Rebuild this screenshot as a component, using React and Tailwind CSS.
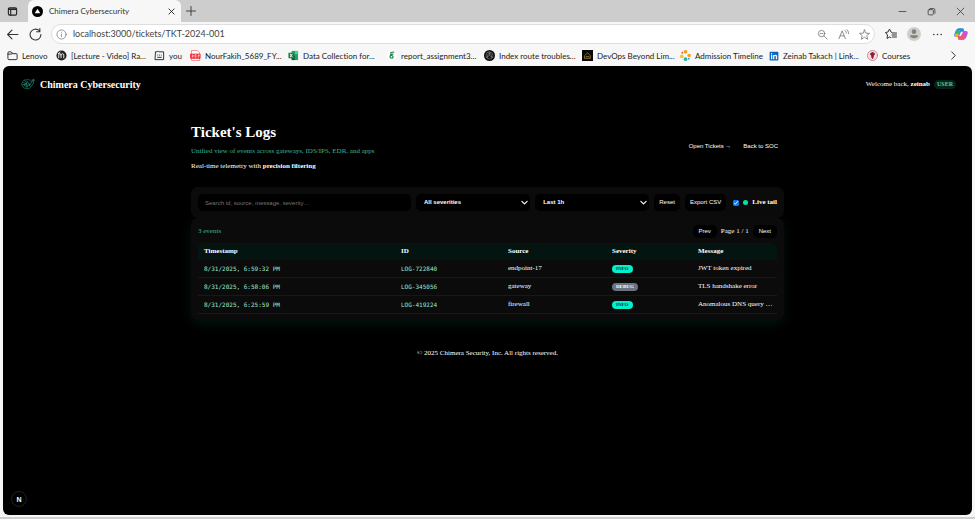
import React from "react";
import { FaLinkedin } from "react-icons/fa";

const stroke = { fill: "none", stroke: "currentColor", strokeLinecap: "round", strokeLinejoin: "round" };

function Icon({ size = "size-[11px]", box = "0 0 24 24", width = 2, className = "", children }) {
  return (
    <svg viewBox={box} {...stroke} strokeWidth={width} className={`${size} shrink-0 ${className}`} aria-hidden="true">
      {children}
    </svg>
  );
}

const bookmarks = [
  {
    label: "Lenovo",
    slot: "w-[49px]",
    icon: (
      <Icon>
        <path d="M2 6a2 2 0 0 1 2-2h5l3 4h8a2 2 0 0 1 2 2v9a2 2 0 0 1-2 2H4a2 2 0 0 1-2-2zM2 9h7l3-2" />
      </Icon>
    ),
  },
  {
    label: "[Lecture - Video] Ra...",
    slot: "w-[98px]",
    icon: (
      <Icon>
        <circle cx="12" cy="12" r="11" fill="#222" stroke="none" />
        <path d="M6 17v-6c0-4 5-4 5 0v6m0-6c0-4 6-4 6 0v6M5 8l4-3" stroke="#fff" />
      </Icon>
    ),
  },
  {
    label: "you",
    slot: "w-[36px]",
    icon: (
      <Icon>
        <path d="M3 8V4h4l2-2 2 2h10v17H3zM8 11v.1M12 11v.1M16 11v.1M8 16h8" />
      </Icon>
    ),
  },
  {
    label: "NourFakih_5689_FY...",
    slot: "w-[98px]",
    icon: (
      <Icon>
        <path d="M4 1h12l5 5v17H4z" fill="#fff" stroke="#e88" />
        <path d="M2 9h20v9H2z" fill="#f02a2f" stroke="#f02a2f" />
        <path d="M5 16v-5h2v3H5M11 11v5h2v-5zM18 16v-5h3M18 13h2" stroke="#fff" strokeWidth="1.2" />
      </Icon>
    ),
  },
  {
    label: "Data Collection for...",
    slot: "w-[98px]",
    icon: (
      <Icon>
        <path d="M8 2h14v20H8z" fill="#21a366" stroke="none" />
        <path d="M15 2h7v7h-7z" fill="#4fd08c" stroke="none" />
        <path d="M8 12h7v10H8z" fill="#185c37" stroke="none" />
        <path d="M1 6h12v12H1z" fill="#107c41" stroke="none" />
        <path d="m5 9 4 6m0-6-4 6" stroke="#fff" />
      </Icon>
    ),
  },
  {
    label: "report_assignment3...",
    slot: "w-[98px]",
    icon: (
      <Icon>
        <circle cx="12" cy="12" r="11" fill="#fff" stroke="none" />
        <path d="M15 9c-7-1-8 9-3 9 5 0 4-6 0-6M10 7c1-3 4-3 7-2" stroke="#16803f" strokeWidth="2.6" />
      </Icon>
    ),
  },
  {
    label: "Index route troubles...",
    slot: "w-[98px]",
    icon: (
      <Icon>
        <circle cx="12" cy="12" r="12" fill="#111" stroke="none" />
        <path d="M12 4l7 4v8l-7 4-7-4V8zM12 4v8l7 4M12 12l-7 4M8 6l8 4v8M16 6l-8 4v8" stroke="#999" strokeWidth="1" />
      </Icon>
    ),
  },
  {
    label: "DevOps Beyond Lim...",
    slot: "w-[98px]",
    icon: (
      <Icon>
        <path d="M0 0h24v24H0z" fill="#080808" stroke="none" />
        <path d="M6 12l6-6 6 6v6H6zM9 14h6" stroke="#8f7430" />
        <path d="M6 18h12" stroke="#6a5440" />
      </Icon>
    ),
  },
  {
    label: "Admission Timeline",
    slot: "w-[89px]",
    icon: (
      <Icon>
        <circle cx="12" cy="4" r="4" fill="#f39c1f" stroke="none" />
        <circle cx="20" cy="12" r="4" fill="#f3a51f" stroke="none" />
        <circle cx="12" cy="20" r="4" fill="#27b3a5" stroke="none" />
        <circle cx="4" cy="14" r="4" fill="#f1c430" stroke="none" />
        <circle cx="5" cy="6" r="2" fill="#e6543a" stroke="none" />
        <circle cx="19" cy="19" r="2" fill="#36a8d8" stroke="none" />
      </Icon>
    ),
  },
  {
    label: "Zeinab Takach | Link...",
    slot: "w-[98px]",
    icon: <FaLinkedin className="size-[10px] shrink-0 text-[#0a66c2]" />,
  },
  {
    label: "Courses",
    slot: "w-[60px]",
    icon: (
      <Icon>
        <circle cx="12" cy="12" r="11" fill="#f3dfe4" stroke="#b5657c" strokeWidth="1.5" />
        <path d="M12 6a3 3 0 0 1 2 6l-1 6h-2l-1-6a3 3 0 0 1 2-6z" fill="#951836" stroke="#951836" />
      </Icon>
    ),
  },
];

function Chrome() {
  return (
    <header className="font-[Lato,'Open_Sans',sans-serif] text-[#333] [font-variant-ligatures:none]">
      <div className="flex h-[22px] items-stretch bg-[#cdcdcd]">
        <button type="button" aria-label="Tab actions" className="flex w-7 items-center pl-[7px]">
          <Icon width={2.4} className="text-[#222]">
            <rect x="3" y="4" width="18" height="16" rx="3" />
            <path d="M4 7h16" strokeWidth="3" />
            <path d="M8 8v12" />
          </Icon>
        </button>
        <div className="flex w-[153px] items-center rounded-t-md bg-[#f7f7f7] pr-[5px] pl-1">
          <Icon>
            <circle cx="12" cy="12" r="12" fill="#000" stroke="none" />
            <path d="M12 6l6 10H6z" fill="#fff" stroke="none" />
          </Icon>
          <span className="ml-[6px] flex-1 text-[8px] leading-[18px] whitespace-nowrap">Chimera Cybersecurity</span>
          <button type="button" aria-label="Close tab">
            <Icon size="size-[9px]" width={2.4} className="text-[#222]">
              <path d="m5 5 14 14M19 5 5 19" />
            </Icon>
          </button>
        </div>
        <button type="button" aria-label="New tab" className="px-1">
          <Icon size="size-[12px]" width={1.8}>
            <path d="M12 3v18M3 12h18" />
          </Icon>
        </button>
        <div className="ml-auto flex items-center gap-5 pr-[10px]">
          <button type="button" aria-label="Minimize">
            <Icon size="size-[9px]"><path d="M3 12h18" /></Icon>
          </button>
          <button type="button" aria-label="Restore">
            <Icon size="size-[9px]">
              <rect x="3" y="7" width="14" height="14" rx="3" />
              <path d="M8 4h9a4 4 0 0 1 4 4v9" />
            </Icon>
          </button>
          <button type="button" aria-label="Close window">
            <Icon size="size-[9px]"><path d="m3 3 18 18M21 3 3 21" /></Icon>
          </button>
        </div>
      </div>

      <div className="flex h-6 items-center bg-[#f7f7f7] pr-[7px] pl-[6px]">
        <button type="button" aria-label="Back">
          <Icon size="size-[13px]"><path d="M22 12H3M11 4l-8 8 8 8" /></Icon>
        </button>
        <button type="button" aria-label="Refresh" className="ml-[10px]">
          <Icon size="size-[13px]"><path d="M19 5a10 10 0 1 0 3 7M20 1v6h-6" /></Icon>
        </button>
        <div className="ml-[9px] flex h-5 flex-1 items-center rounded-full border border-[#dedede] bg-white px-1">
          <Icon className="text-[#777]" width={1.6}>
            <circle cx="12" cy="12" r="10" />
            <path d="M12 11v6M12 7v.1" />
          </Icon>
          <input
            aria-label="Address"
            defaultValue="localhost:3000/tickets/TKT-2024-001"
            className="ml-[6px] min-w-0 flex-1 bg-transparent text-[9px] text-[#444] outline-none"
          />
          <div className="flex items-center gap-[10px] text-[#777]">
            <button type="button" aria-label="Zoom out">
              <Icon width={1.8}><circle cx="10" cy="10" r="7" /><path d="m15 15 7 7M7 10h6" /></Icon>
            </button>
            <button type="button" aria-label="Read aloud">
              <Icon width={1.8}><path d="M2 21 9 4l7 17M5 15h8M15 3c2 1 3 3 3 6M19 1c3 2 4 5 4 9" /></Icon>
            </button>
            <button type="button" aria-label="Add to favorites">
              <Icon width={1.8}><path d="m12 2 3 7 8 .5-6 5 2 8-7-4.500-7 4.500 2-8-6-5L9 9z" /></Icon>
            </button>
          </div>
        </div>
        <button type="button" aria-label="Favorites" className="ml-[10px]">
          <Icon size="size-[12px]"><path d="m14 9-2-1-3-6-3 6-5 1 4 5-1 7 5-3 3 1M15 10h8M14 14h9M15 18h8" /></Icon>
        </button>
        <button type="button" aria-label="Profile" className="ml-[10px]">
          <Icon size="size-[14px]">
            <circle cx="12" cy="12" r="12" fill="#d0cecb" stroke="none" />
            <circle cx="12" cy="8" r="4" fill="#84817d" stroke="none" />
            <path d="M5 14h14c0 7-14 7-14 0z" fill="#84817d" stroke="none" />
          </Icon>
        </button>
        <button type="button" aria-label="More" className="ml-[11px]">
          <Icon width={3.5}><path d="M4 12v.1M12 12v.1M20 12v.1" /></Icon>
        </button>
        <button type="button" aria-label="Copilot" className="ml-[11px]">
          <Icon size="size-[14px]" width={1}>
            <path d="M9 2h7l2 6h-6L8 17H4c-4 0-4-3-3-6 2-5 3-9 8-9z" fill="#2b8be6" stroke="none" />
            <path d="M4 8c-4 8-3 10 3 9l2-8z" fill="#f0b429" stroke="none" />
            <path d="M5 5h6L9 12H2z" fill="#35b97c" stroke="none" />
            <path d="M15 22H8l-2-6h6l4-9h4c4 0 4 3 3 6-2 5-3 9-8 9z" fill="#c954d8" stroke="none" />
            <path d="M8 22l-2-6h6l2-4 5 6c-1 3-2 4-4 4z" fill="#f0596d" stroke="none" />
          </Icon>
        </button>
      </div>

      <nav aria-label="Bookmarks" className="flex h-5 items-center bg-[#f7f7f7] pr-4 pb-px pl-[7px] text-[8px] text-[#222]">
        {bookmarks.map((b) => (
          <a key={b.label} href="#" className={`flex shrink-0 items-center gap-1 whitespace-nowrap ${b.slot}`}>
            {b.icon}
            {b.label}
          </a>
        ))}
        <button type="button" aria-label="More bookmarks" className="ml-auto">
          <Icon><path d="m8 4 8 8-8 8" /></Icon>
        </button>
      </nav>
    </header>
  );
}

const events = [
  { time: "8/31/2025, 6:59:32 PM", id: "LOG-722840", source: "endpoint-17", severity: "INFO", message: "JWT token expired" },
  { time: "8/31/2025, 6:58:06 PM", id: "LOG-345056", source: "gateway", severity: "DEBUG", message: "TLS handshake error" },
  { time: "8/31/2025, 6:25:59 PM", id: "LOG-419224", source: "firewall", severity: "INFO", message: "Anomalous DNS query …" },
];

const badgeTone = {
  INFO: "bg-[#00f0d0] text-[#02302a]",
  DEBUG: "bg-[#6b7280] text-white",
};

const control = "rounded-[5px] bg-black font-['Liberation_Sans',Arial,sans-serif] text-[6px] text-white";

function Picker({ label, options }) {
  return (
    <div className="relative flex-1">
      <select aria-label={label} className={`${control} block h-[17px] w-full appearance-none px-2 font-bold`}>
        {options.map((o) => <option key={o}>{o}</option>)}
      </select>
      <Icon size="size-[7px]" width={4} className="pointer-events-none absolute top-[5px] right-[2px] text-white">
        <path d="m3 8 9 9 9-9" />
      </Icon>
    </div>
  );
}

export default function App() {
  return (
    <div className="flex min-h-screen flex-col border-b-2 border-[#cfcfcf] bg-[#f7f7f7]">
      <Chrome />
      <div className="mx-[3px] mb-[2px] flex flex-1 flex-col rounded-md bg-black px-2 font-['Liberation_Serif','Times_New_Roman',serif] text-[7px] text-white">
        <div className="flex h-9 items-center pr-2 pl-[10px]">
          <Icon size="h-[12px] w-[14px]" box="0 0 28 24" width={1.4} className="text-[#1b9480]">
            <path d="M2 13c-1-6 4-10 8-9 4-2 9 0 10 3l6-5-1 8-4 6c-2 4-6 7-10 5-5 0-9-4-9-8z" strokeDasharray="3 2" />
            <path d="M5 9l5 3 3-5 4 6 6-6M7 15l5 2 4-3 3 3M12 12v8M22 4l4 1M8 6l3 2M5 13h3" />
            <circle cx="10" cy="12" r="1" />
            <circle cx="17" cy="13" r="1" />
          </Icon>
          <span className="ml-[5px] text-[10px] font-bold">Chimera Cybersecurity</span>
          <span className="ml-auto">Welcome back, <b>zeinab</b></span>
          <span className="ml-1 rounded-full bg-[#04231d] px-[3px] text-[6px] leading-[9px] font-bold text-[#4fcdb0]">USER</span>
        </div>

        <main className="mx-auto w-full max-w-[593px] pt-[19px]">
          <div className="flex items-center justify-between">
            <div>
              <h1 className="text-[15px] leading-[22px] font-bold">Ticket's Logs</h1>
              <p className="mt-[3px] leading-[10px] text-[#3fb595]">Unified view of events across gateways, IDS/IPS, EDR, and apps</p>
              <p className="mt-[6px] leading-[9px]">Real-time telemetry with <b>precision filtering</b></p>
            </div>
            <div className="flex">
              <button type="button" className={`${control} h-[17px] px-[6px]`}>Open Tickets →</button>
              <button type="button" className={`${control} h-[17px] px-[6px]`}>Back to SOC</button>
            </div>
          </div>

          <form className="mt-4 flex items-center gap-[5px] rounded-[7px] bg-[#0b0b0b] px-[7px] py-[7px]" onSubmit={(e) => e.preventDefault()}>
            <input aria-label="Search events" placeholder="Search id, source, message, severity…" className={`${control} h-[17px] w-[213px] px-[7px] placeholder:text-[#757575]`} />
            <Picker label="Severity" options={["All severities", "Info", "Debug"]} />
            <Picker label="Time range" options={["Last 1h", "Last 24h"]} />
            <button type="reset" className={`${control} h-[17px] px-[5px]`}>Reset</button>
            <button type="button" className={`${control} h-[17px] px-[5px]`}>Export CSV</button>
            <label className="ml-[2px] flex items-center gap-1 font-bold whitespace-nowrap">
              <input type="checkbox" defaultChecked className="size-[6px] accent-[#0075ff]" />
              <span className="size-[5px] rounded-full bg-[#00e5b0]" />
              Live tail
            </label>
          </form>

          <section className="rounded-[7px] bg-[#0b0b0b] px-[7px] pt-[7px] pb-[6px] shadow-[0_4px_12px_#00140f]">
            <div className="flex h-[13px] items-center">
              <span className="text-[#3fb595]">3 events</span>
              <button type="button" className={`${control} ml-auto h-[13px] px-[6px]`}>Prev</button>
              <span className="px-1">Page 1 / 1</span>
              <button type="button" className={`${control} h-[13px] px-[6px]`}>Next</button>
            </div>
            <table className="mt-[5px] w-full table-fixed border-separate border-spacing-0 text-left">
              <colgroup>
                <col />
                <col className="w-[107px]" />
                <col className="w-[104px]" />
                <col className="w-[86px]" />
                <col className="w-[85px]" />
              </colgroup>
              <thead>
                <tr className="h-[17px]">
                  {["Timestamp", "ID", "Source", "Severity", "Message"].map((h) => (
                    <th key={h} className="bg-[#031411] py-0 pl-[6px] font-bold first:rounded-tl-[5px] last:rounded-tr-[5px]">{h}</th>
                  ))}
                </tr>
              </thead>
              <tbody className="[&_td]:border-b [&_td]:border-[#06211b] [&_td]:py-0 [&_td]:pl-[6px]">
                {events.map((e) => (
                  <tr key={e.id} className="h-[18px]">
                    <td className="font-['DejaVu_Sans_Mono',monospace] text-[6px] text-[#9fe8d5]">{e.time}</td>
                    <td className="font-['DejaVu_Sans_Mono',monospace] text-[6px] text-[#9fe8d5]">{e.id}</td>
                    <td>{e.source}</td>
                    <td>
                      <span className={`inline-block rounded-full px-1 align-middle text-[5px] leading-[8px] font-bold ${badgeTone[e.severity]}`}>{e.severity}</span>
                    </td>
                    <td className="whitespace-nowrap">{e.message}</td>
                  </tr>
                ))}
              </tbody>
            </table>
          </section>
        </main>

        <footer className="mt-7 text-center">© 2025 Chimera Security, Inc. All rights reserved.</footer>
        <button type="button" aria-label="Developer tools" className="mt-auto mb-2 flex size-4 items-center justify-center rounded-full border border-[#222] bg-black">
          <span className="font-['Liberation_Sans',sans-serif] text-[7px] leading-none font-bold">N</span>
        </button>
      </div>
    </div>
  );
}
